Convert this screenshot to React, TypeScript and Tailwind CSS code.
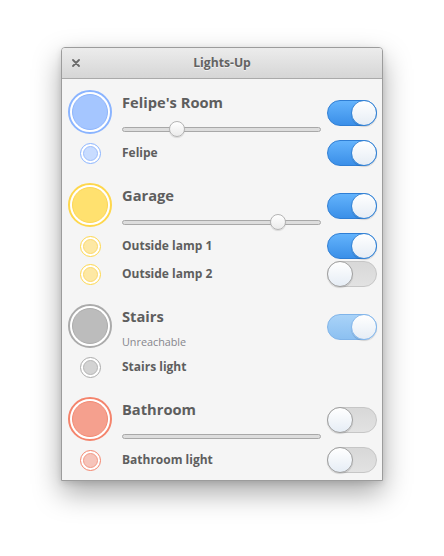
import React from 'react';

// Colour set for a group's bulb icon
interface Tint {
  ring: string;
  fill: string;
  smallFill: string;
}

interface Light {
  name: string;
  on?: boolean;
}

interface Group {
  name: string;
  tint: Tint;
  on: boolean;
  level?: number;
  sliderOff?: boolean;
  unreachable?: boolean;
  lights: Light[];
}

const blue: Tint = {
  ring: 'border-[#8ab4ff]',
  fill: 'bg-[#a5c6ff] border-[#8eb5fc]',
  smallFill: 'bg-[#c8dcff] border-[#9dbefc]',
};
const yellow: Tint = {
  ring: 'border-[#fed74c]',
  fill: 'bg-[#ffe16f] border-[#fdd655]',
  smallFill: 'bg-[#fde8a4] border-[#fcd96c]',
};
const gray: Tint = {
  ring: 'border-[#ababab]',
  fill: 'bg-[#bcbcbc] border-[#acacac]',
  smallFill: 'bg-[#d3d3d3] border-[#b5b5b5]',
};
const red: Tint = {
  ring: 'border-[#f4846c]',
  fill: 'bg-[#f5a08e] border-[#f28a73]',
  smallFill: 'bg-[#f6c4ba] border-[#f39a87]',
};

const groups: Group[] = [
  { name: "Felipe's Room", tint: blue, on: true, level: 0.255, lights: [{ name: 'Felipe', on: true }] },
  {
    name: 'Garage',
    tint: yellow,
    on: true,
    level: 0.81,
    lights: [
      { name: 'Outside lamp 1', on: true },
      { name: 'Outside lamp 2', on: false },
    ],
  },
  { name: 'Stairs', tint: gray, on: true, unreachable: true, lights: [{ name: 'Stairs light' }] },
  { name: 'Bathroom', tint: red, on: false, sliderOff: true, lights: [{ name: 'Bathroom light', on: false }] },
];

const Switch: React.FC<{ on: boolean; dim?: boolean }> = ({ on, dim }) => {
  const track = on
    ? dim
      ? 'bg-linear-to-b from-[#a9d3f8] to-[#8cc0f1] border-[#80b4e9] justify-end'
      : 'bg-linear-to-b from-[#63b3fc] to-[#3a8fe8] border-[#2f7ed4] justify-end'
    : 'bg-linear-to-b from-[#d8d8d8] to-[#e2e2e2] border-[#c6c6c6] justify-start';
  const knob = on
    ? dim
      ? 'border-[#86b8ec]'
      : 'border-[#3584d6]'
    : 'border-[#a0a0a0]';
  return (
    <div className={`w-[50px] h-[26px] shrink-0 rounded-full border flex items-center ${track}`}>
      <div
        className={`w-[26px] h-[26px] -m-px rounded-full border bg-linear-to-b from-white to-[#e6edf5] shadow-[0_1px_1px_rgba(0,0,0,0.15)] ${knob}`}
      />
    </div>
  );
};

const Slider: React.FC<{ level?: number }> = ({ level }) => (
  <div className="relative h-[16px] flex items-center">
    <div className="h-[5px] w-full rounded-full bg-[#dddddd] border border-[#a8a8a8]" />
    {level !== undefined && (
      <div
        className="absolute top-0 w-[16px] h-[16px] rounded-full border border-[#b4b4b4] bg-linear-to-b from-white to-[#ebebeb] shadow-[0_1px_1px_rgba(0,0,0,0.12)]"
        style={{ left: `calc(${level * 100}% - ${level * 16}px)` }}
      />
    )}
  </div>
);

const BigBulb: React.FC<{ tint: Tint }> = ({ tint }) => (
  <div className={`w-[44px] h-[44px] shrink-0 rounded-full border-2 bg-white p-[2px] ${tint.ring}`}>
    <div className={`w-full h-full rounded-full border ${tint.fill}`} />
  </div>
);

const SmallBulb: React.FC<{ tint: Tint }> = ({ tint }) => (
  <div className={`w-[21px] h-[21px] rounded-full border-[1.5px] bg-white p-[2px] ${tint.ring}`}>
    <div className={`w-full h-full rounded-full border ${tint.smallFill}`} />
  </div>
);

const GroupBlock: React.FC<{ group: Group }> = ({ group }) => (
  <div className="flex flex-col">
    {/* Group header */}
    <div className="flex items-start h-[47px]">
      <BigBulb tint={group.tint} />
      <div className="flex-1 ml-[10px] mr-[6px] pt-[2px] flex flex-col">
        <div className="text-[14.7px] leading-[20px] font-bold text-[#5e5e5e]">{group.name}</div>
        {group.unreachable ? (
          <div className="mt-[9px] text-[10.8px] leading-[14px] text-[#85858c]">Unreachable</div>
        ) : (
          <div className="mt-[9px]">
            <Slider level={group.sliderOff ? undefined : group.level} />
          </div>
        )}
      </div>
      <div className="mt-[10px]">
        <Switch on={group.on} dim={group.unreachable} />
      </div>
    </div>

    {/* Lights */}
    <div className="mt-[2px] flex flex-col">
      {group.lights.map((light) => (
        <div key={light.name} className="flex items-center h-[28px]">
          <div className="w-[44px] flex justify-center">
            <SmallBulb tint={group.tint} />
          </div>
          <div className="flex-1 ml-[10px] text-[12px] font-bold text-[#5e5e5e]">{light.name}</div>
          {light.on !== undefined && <Switch on={light.on} />}
        </div>
      ))}
    </div>
  </div>
);

export default function App() {
  return (
    <div
      className="min-h-screen w-full bg-white flex justify-center items-start pt-[47px]"
      style={{ fontFamily: '"Open Sans", "Noto Sans", sans-serif' }}
    >
      <div className="w-[322px] border border-[#9c9c9c] rounded-t-[4px] bg-[#f5f5f5] shadow-[0_12px_28px_rgba(0,0,0,0.34),0_2px_6px_rgba(0,0,0,0.12)]">
        {/* Title bar */}
        <div className="relative h-[31px] rounded-t-[3px] border-b border-[#aaaaaa] bg-linear-to-b from-[#ececec] to-[#d6d6d6] flex items-center justify-center">
          <button className="absolute left-[10px] top-[11px] text-[#6a6a6a]">
            <svg width="8" height="8" viewBox="0 0 8 8" fill="none" stroke="currentColor" strokeWidth="1.8" strokeLinecap="round">
              <path d="M1 1 L7 7 M7 1 L1 7" />
            </svg>
          </button>
          <span className="text-[12.2px] font-bold text-[#636363] [text-shadow:0_1px_0_rgba(255,255,255,0.6)]">Lights-Up</span>
        </div>

        {/* Groups */}
        <div className="pl-[6px] pr-[5px] pt-[11px] pb-[6px] flex flex-col gap-4">
          {groups.map((g) => (
            <GroupBlock key={g.name} group={g} />
          ))}
        </div>
      </div>
    </div>
  );
}
